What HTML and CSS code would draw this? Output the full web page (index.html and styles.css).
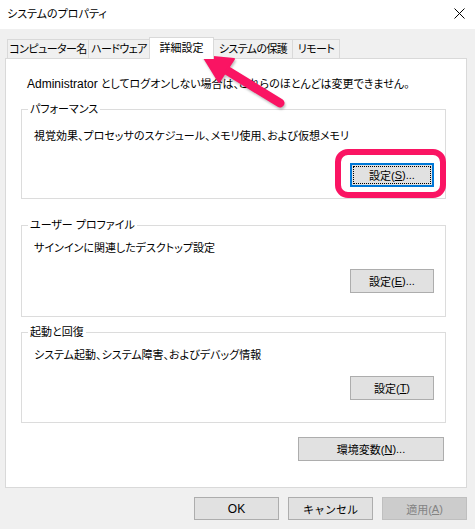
FILE: index.html
```html
<!DOCTYPE html>
<html lang="ja">
<head>
    <meta charset="UTF-8">
    <title>システムのプロパティ</title>
    <link rel="stylesheet" href="styles.css">
</head>
<body>
    <div class="window">
        <div class="titlebar">
            <span class="title">システムのプロパティ</span>
            <svg class="close" width="11" height="11" viewBox="0 0 11 11">
                <path d="M0.5 0.5 L10.5 10.5 M10.5 0.5 L0.5 10.5" stroke="#000" stroke-width="1" fill="none"/>
            </svg>
        </div>

        <div class="tabs">
            <div class="tab tab-name">コンピューター名</div>
            <div class="tab tab-hw">ハードウェア</div>
            <div class="tab tab-adv active">詳細設定</div>
            <div class="tab tab-prot">システムの保護</div>
            <div class="tab tab-remote">リモート</div>
        </div>

        <div class="panel">
            <p class="note"><span class="latin">Administrator</span> としてログオンしない場合は、これらのほとんどは変更できません。</p>

            <fieldset class="group group-perf">
                <legend>パフォーマンス</legend>
                <p class="desc">視覚効果、プロセッサのスケジュール、メモリ使用、および仮想メモリ</p>
                <div class="group-actions">
                    <span class="highlight">
                        <button class="btn focused"><span class="focus-ring">設定(<u>S</u>)...</span></button>
                    </span>
                </div>
            </fieldset>

            <fieldset class="group group-profile">
                <legend>ユーザー プロファイル</legend>
                <p class="desc">サインインに関連したデスクトップ設定</p>
                <div class="group-actions">
                    <button class="btn">設定(<u>E</u>)...</button>
                </div>
            </fieldset>

            <fieldset class="group group-startup">
                <legend>起動と回復</legend>
                <p class="desc">システム起動、システム障害、およびデバッグ情報</p>
                <div class="group-actions">
                    <button class="btn">設定(<u>T</u>)</button>
                </div>
            </fieldset>

            <div class="env-row">
                <button class="btn btn-env">環境変数(<u>N</u>)...</button>
            </div>
        </div>

        <div class="actions">
            <button class="btn btn-dialog"><span class="latin">OK</span></button>
            <button class="btn btn-dialog">キャンセル</button>
            <button class="btn btn-dialog" disabled>適用(<u>A</u>)</button>
        </div>

        <!-- 注釈の矢印 -->
        <svg class="arrow" width="95" height="66" viewBox="0 0 95 66">
            <line x1="85" y1="54" x2="28" y2="19" stroke="#fa1463" stroke-width="9" stroke-linecap="round"/>
            <polygon points="8,7 39,10 24,33" fill="#fa1463" stroke="#fa1463" stroke-width="2" stroke-linejoin="round"/>
        </svg>
    </div>
</body>
</html>
```

FILE: styles.css
```css
* {
    margin: 0;
    padding: 0;
    box-sizing: border-box;
}

body {
    background: #f0f0f0;
    font-family: 'Liberation Sans', 'Noto Sans CJK JP', sans-serif;
    font-size: 11px;
    line-height: 14px;
    color: #000;
    font-feature-settings: "palt";
}

.latin {
    font-size: 12px;
}

.window {
    position: relative;
    width: 475px;
    height: 529px;
    background: #f0f0f0;
}

/* タイトルバー */
.titlebar {
    height: 29px;
    background: #fff;
    display: flex;
    align-items: center;
    justify-content: space-between;
    padding: 0 10px 2px 7px;
}

.close {
    display: block;
}

/* タブ */
.tabs {
    display: flex;
    align-items: flex-end;
    height: 21px;
    margin-top: 8px;
    padding-left: 7px;
}

.tab {
    height: 19px;
    border: 1px solid #d9d9d9;
    border-bottom: none;
    margin-right: -1px;
    background: #f0f0f0;
    text-align: center;
    line-height: 18px;
    white-space: nowrap;
    letter-spacing: -0.6px;
}

.tab-name { width: 82px; }
.tab-hw { width: 62px; }
.tab-adv { width: 65px; }
.tab-prot { width: 80px; }
.tab-remote { width: 48px; }

.tab.active {
    position: relative;
    z-index: 1;
    height: 22px;
    margin-bottom: -1px;
    background: #fff;
    line-height: 20px;
    letter-spacing: 0;
}

/* パネル */
.panel {
    margin: 0 8px 0 5px;
    height: 430px;
    background: #fff;
    border: 1px solid #d9d9d9;
    padding: 18px 20px 0 15px;
}

.note {
    padding-left: 6px;
    margin-bottom: 11px;
    white-space: nowrap;
}

.group {
    border: 1px solid #dcdcdc;
    padding: 0 11px 0 12px;
}

.group legend {
    margin-left: -6px;
    padding: 0 2px;
    line-height: 14px;
}

.desc {
    white-space: nowrap;
}

.group-actions {
    display: flex;
    justify-content: flex-end;
}

.group-perf {
    padding-bottom: 11px;
}

.group-perf .desc {
    margin-top: 13px;
}

.group-perf .group-actions {
    margin-top: 20px;
}

.group-profile {
    margin-top: 19px;
    padding-bottom: 23px;
}

.group-startup {
    margin-top: 8px;
    padding-bottom: 22px;
}

.group-profile .desc,
.group-startup .desc {
    margin-top: 9px;
}

.group-profile .group-actions,
.group-startup .group-actions {
    margin-top: 14px;
}

/* ボタン */
.btn {
    width: 84px;
    height: 24px;
    background: #e1e1e1;
    border: 1px solid #adadad;
    font-family: inherit;
    font-size: 11px;
    color: #000;
    display: flex;
    align-items: center;
    justify-content: center;
}

.btn u {
    text-underline-offset: 1px;
}

.btn.focused {
    border: 2px solid #0078d7;
    padding: 1px;
}

.focus-ring {
    display: flex;
    align-items: center;
    justify-content: center;
    width: 100%;
    height: 100%;
    border: 1px dotted #000;
}

.highlight {
    position: relative;
    display: block;
}

.highlight::before {
    content: "";
    position: absolute;
    left: -15px;
    right: -12px;
    top: -14px;
    bottom: -11px;
    border: 6px solid #fa1463;
    border-radius: 13px;
}

.env-row {
    display: flex;
    justify-content: flex-end;
    margin-top: 14px;
    padding-right: 2px;
}

.btn-env {
    width: 146px;
}

.actions {
    display: flex;
    justify-content: flex-end;
    gap: 9px;
    margin-top: 9px;
    padding-right: 8px;
}

.btn-dialog {
    width: 85px;
    height: 23px;
}

.btn:disabled {
    background: #cccccc;
    border-color: #bfbfbf;
    color: #838383;
}

.arrow {
    position: absolute;
    left: 195px;
    top: 49px;
    filter: drop-shadow(1px 2px 1px rgba(0, 0, 0, 0.25));
}
```
